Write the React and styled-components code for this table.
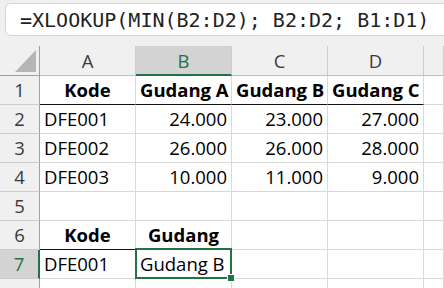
import styled, { createGlobalStyle } from 'styled-components';

const GREEN = '#217346';

const columns = ['A', 'B', 'C', 'D', ''];

// each row: cells in column order; a cell is { v, align, bold, line, selected }
const rows = [
  [
    { v: 'Kode', align: 'center', bold: true, line: true },
    { v: 'Gudang A', align: 'center', bold: true, line: true },
    { v: 'Gudang B', align: 'center', bold: true, line: true },
    { v: 'Gudang C', align: 'center', bold: true, line: true },
  ],
  [{ v: 'DFE001' }, { v: '24.000', align: 'right' }, { v: '23.000', align: 'right' }, { v: '27.000', align: 'right' }],
  [{ v: 'DFE002' }, { v: '26.000', align: 'right' }, { v: '26.000', align: 'right' }, { v: '28.000', align: 'right' }],
  [{ v: 'DFE003' }, { v: '10.000', align: 'right' }, { v: '11.000', align: 'right' }, { v: '9.000', align: 'right' }],
  [],
  [
    { v: 'Kode', align: 'center', bold: true, line: true },
    { v: 'Gudang', align: 'center', bold: true, line: true },
  ],
  [{ v: 'DFE001' }, { v: 'Gudang B', selected: true }],
];

const activeRow = 7;
const activeCol = 'B';

function App() {
  return (
    <>
      <GlobalStyle />
      <Page>
        <FormulaBar>
          <FormulaText>=XLOOKUP(MIN(B2:D2); B2:D2; B1:D1)</FormulaText>
        </FormulaBar>
        <Sheet>
          <Corner>
            <CornerMark />
          </Corner>
          {columns.map((c, i) => (
            <ColHeader key={'h' + i} $active={c === activeCol}>
              {c}
            </ColHeader>
          ))}
          {rows.map((cells, r) => (
            <Row key={r} label={r + 1} cells={cells} />
          ))}
          {/* next row is only partly scrolled into view */}
          <Row label="" cells={[]} />
        </Sheet>
      </Page>
    </>
  );
}

function Row({ label, cells }) {
  return (
    <>
      <RowHeader $active={label === activeRow}>{label}</RowHeader>
      {columns.map((_, i) => {
        const cell = cells[i] || {};
        return (
          <Cell key={i} $align={cell.align} $bold={cell.bold} $line={cell.line}>
            {cell.v}
            {cell.selected && (
              <Selection>
                <FillHandle />
              </Selection>
            )}
          </Cell>
        );
      })}
    </>
  );
}

const GlobalStyle = createGlobalStyle`
  html, body {
    margin: 0;
    padding: 0;
    background: #f0f0f0;
    overflow: hidden;
  }
`;

const Page = styled.div`
  width: 444px;
  height: 288px;
  overflow: hidden;
  background: #f0f0f0;
  padding-top: 3px;
  box-sizing: border-box;
`;

const FormulaBar = styled.div`
  margin-left: 5px;
  width: 460px;
  height: 33px;
  box-sizing: border-box;
  background: #fff;
  border: 1px solid #d6d6d6;
  border-radius: 6px;
  display: flex;
  align-items: center;
  padding-left: 14px;
`;

const FormulaText = styled.span`
  font-family: 'DejaVu Sans Mono', monospace;
  font-size: 20px;
  color: #1f1f1f;
  white-space: nowrap;
  padding-top: 1px;
`;

const Sheet = styled.div`
  margin-top: 10px;
  display: grid;
  grid-template-columns: 40px repeat(4, 96px) 1fr;
  grid-template-rows: 30px repeat(8, 29px);
  font-family: 'Open Sans', sans-serif;
  font-size: 18.5px;
`;

const Corner = styled.div`
  position: relative;
  box-sizing: border-box;
  border-right: 1px solid #9f9f9f;
  border-bottom: 1px solid #9f9f9f;
`;

const CornerMark = styled.div`
  position: absolute;
  right: 3px;
  bottom: 3px;
  width: 0;
  height: 0;
  border-left: 21px solid transparent;
  border-bottom: 22px solid #b5b5b5;
`;

const ColHeader = styled.div`
  box-sizing: border-box;
  border-right: 1px solid #cdcdcd;
  border-bottom: ${(p) => (p.$active ? `2px solid ${GREEN}` : '1px solid #bdbdbd')};
  background: ${(p) => (p.$active ? '#d3d3d3' : '#f0f0f0')};
  color: ${(p) => (p.$active ? GREEN : '#3b3b3b')};
  text-align: center;
  line-height: 28px;
  padding-top: 1px;
`;

const RowHeader = styled.div`
  box-sizing: border-box;
  border-right: ${(p) => (p.$active ? `2px solid ${GREEN}` : '1px solid #9f9f9f')};
  border-bottom: 1px solid #cdcdcd;
  background: ${(p) => (p.$active ? '#d3d3d3' : '#f0f0f0')};
  color: ${(p) => (p.$active ? GREEN : '#3b3b3b')};
  text-align: center;
  line-height: 28px;
`;

const Cell = styled.div`
  position: relative;
  box-sizing: border-box;
  background: #fff;
  border-right: 1px solid #d9d9d9;
  border-bottom: 1px solid ${(p) => (p.$line ? '#111' : '#d9d9d9')};
  color: #000;
  font-weight: ${(p) => (p.$bold ? 700 : 400)};
  text-align: ${(p) => p.$align || 'left'};
  line-height: 28px;
  padding: 0 4px;
  white-space: nowrap;
`;

const Selection = styled.div`
  position: absolute;
  top: -2px;
  left: -1px;
  right: -1px;
  bottom: -1px;
  border: 2px solid ${GREEN};
  z-index: 2;
  pointer-events: none;
`;

const FillHandle = styled.div`
  position: absolute;
  right: -4px;
  bottom: -4px;
  width: 6px;
  height: 6px;
  background: ${GREEN};
  outline: 1px solid #fff;
`;

export default App;
